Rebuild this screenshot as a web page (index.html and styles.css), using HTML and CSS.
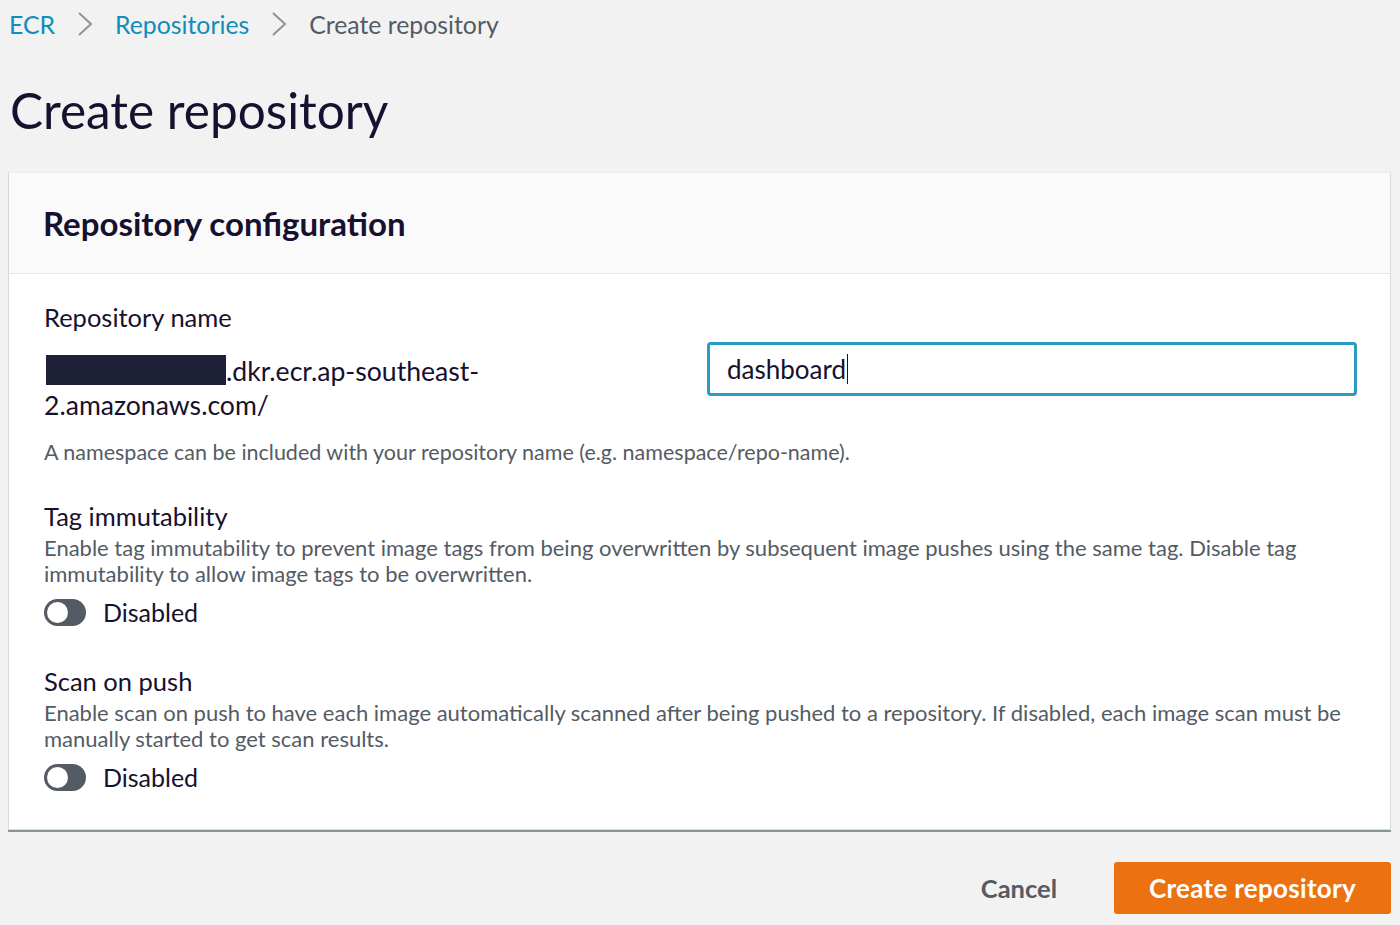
FILE: index.html
```html
<!DOCTYPE html>
<html>
<head>
<meta charset="utf-8">
<link rel="stylesheet" href="styles.css">
</head>
<body>
<div class="page">
  <nav class="crumbs">
    <a class="crumb-link">ECR</a>
    <svg class="chev" width="16" height="26" viewBox="0 0 16 26"><path d="M2 2 L14 13 L2 24" fill="none" stroke="#8d9496" stroke-width="2"/></svg>
    <a class="crumb-link">Repositories</a>
    <svg class="chev" width="16" height="26" viewBox="0 0 16 26"><path d="M2 2 L14 13 L2 24" fill="none" stroke="#8d9496" stroke-width="2"/></svg>
    <span class="crumb-current">Create repository</span>
  </nav>
  <h1 class="title">Create repository</h1>

  <section class="card">
    <header class="card-head">
      <h2>Repository configuration</h2>
    </header>
    <div class="card-body">
      <div class="field">
        <div class="label">Repository name</div>
        <div class="name-row">
          <div class="prefix"><span class="redact"></span>.dkr.ecr.ap-southeast-<br>2.amazonaws.com/</div>
          <div class="input">dashboard<span class="caret"></span></div>
        </div>
        <div class="hint">A namespace can be included with your repository name (e.g. namespace/repo-name).</div>
      </div>

      <div class="field">
        <div class="label">Tag immutability</div>
        <div class="desc">Enable tag immutability to prevent image tags from being overwritten by subsequent image pushes using the same tag. Disable tag immutability to allow image tags to be overwritten.</div>
        <div class="toggle-row"><span class="toggle"><span class="knob"></span></span><span class="toggle-label">Disabled</span></div>
      </div>

      <div class="field">
        <div class="label">Scan on push</div>
        <div class="desc">Enable scan on push to have each image automatically scanned after being pushed to a repository. If disabled, each image scan must be manually started to get scan results.</div>
        <div class="toggle-row"><span class="toggle"><span class="knob"></span></span><span class="toggle-label">Disabled</span></div>
      </div>
    </div>
  </section>

  <div class="actions">
    <button class="btn-link">Cancel</button>
    <button class="btn-primary">Create repository</button>
  </div>
</div>
</body>
</html>
```

FILE: styles.css
```css
html, body {
  margin: 0;
  padding: 0;
  background: #f2f2f2;
  font-family: Lato, "Open Sans", sans-serif;
  color: #16191f;
}
.page {
  padding: 0 9px 0 8px;
}
.crumbs {
  display: flex;
  align-items: center;
  height: 48px;
  gap: 22px;
  padding-left: 1px;
  font-size: 24.8px;
}
.crumb-link {
  color: #0f8dbd;
}
.crumb-current {
  color: #545b64;
}
.chev { display: block; }
.title {
  margin: 32px 0 32px 2px;
  font-size: 49.5px;
  font-weight: 400;
  color: #16112e;
  line-height: 60px;
}
.card {
  background: #fff;
  border: 1px solid #d5dbdb;
  border-top-color: #eaeded;
  box-shadow: 0 2px 0 #879596;
}
.card-head {
  background: #fafafa;
  border-bottom: 1px solid #e4e7e7;
  height: 100px;
  display: flex;
  align-items: center;
  padding-left: 34px;
}
.card-head h2 {
  margin: 0;
  font-size: 33px;
  font-weight: 700;
  color: #16112e;
}
.card-body {
  padding: 26px 33px 37px 35px;
}
.field { margin-bottom: 37px; }
.field:first-child { margin-bottom: 32px; }
.field:last-child { margin-bottom: 0; }
.label {
  font-size: 25.5px;
  color: #16112e;
  line-height: 34px;
}
.name-row {
  display: flex;
  justify-content: space-between;
  align-items: flex-start;
  margin-top: 8px;
}
.prefix {
  font-size: 26.6px;
  line-height: 34px;
  color: #16112e;
  margin-top: 12px;
}
.redact {
  background: #1d2036;
  display: inline-block;
  width: 180px;
  vertical-align: top;
  height: 30px;
  margin-left: 2px;
  margin-top: 1px;
}
.input {
  width: 627px;
  height: 48px;
  border: 3px solid #2b9bc2;
  border-radius: 4px;
  box-sizing: content-box;
  padding: 0 0 0 17px;
  display: flex;
  align-items: center;
  font-size: 26px;
  color: #16112e;
}
.caret {
  display: inline-block;
  width: 1px;
  height: 30px;
  background: #16112e;
  margin-left: 1px;
}
.hint {
  margin-top: 15px;
  font-size: 21.5px;
  color: #545b64;
  line-height: 30px;
}
.desc {
  font-size: 22px;
  color: #545b64;
  line-height: 26px;
  margin-top: 2px;
}
.toggle-row {
  display: flex;
  align-items: center;
  gap: 17px;
  margin-top: 10px;
}
.toggle {
  width: 42px;
  height: 27px;
  border-radius: 14px;
  background: #545b64;
  position: relative;
  display: block;
}
.knob {
  position: absolute;
  left: 3px;
  top: 3px;
  width: 21px;
  height: 21px;
  border-radius: 50%;
  background: #fff;
}
.toggle-label {
  font-size: 25px;
  color: #16112e;
}
.actions {
  display: flex;
  justify-content: flex-end;
  align-items: center;
  gap: 57px;
  margin-top: 32px;
}
.btn-link {
  background: none;
  border: none;
  font-family: inherit;
  font-size: 25.5px;
  font-weight: 700;
  color: #545b64;
  padding: 0;
}
.btn-primary {
  background: #ec7211;
  border: none;
  border-radius: 3px;
  height: 52px;
  width: 277px;
  font-family: inherit;
  font-size: 26px;
  letter-spacing: 0.3px;
  font-weight: 700;
  color: #fff;
}
```
